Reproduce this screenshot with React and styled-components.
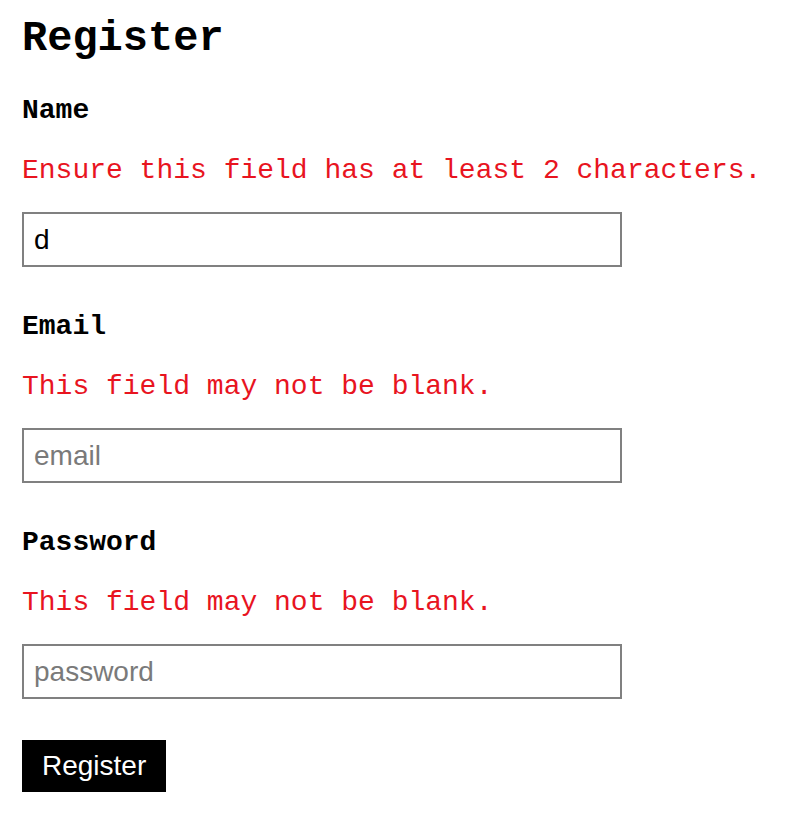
import styled, { createGlobalStyle } from "styled-components"

const GlobalStyle = createGlobalStyle`
  html, body {
    margin: 0;
    padding: 0;
    background: #fff;
  }
`

const Page = styled.div`
  padding: 15px 22px 20px;
  font-family: "Liberation Mono", "Courier New", monospace;
  color: #000;
`

const Title = styled.h1`
  margin: 0 0 32px;
  font-size: 42px;
  line-height: 48px;
  font-weight: bold;
`

const Form = styled.form`
  display: flex;
  flex-direction: column;
  align-items: flex-start;
`

const Field = styled.div`
  display: flex;
  flex-direction: column;
  align-items: flex-start;
  margin-bottom: 44px;

  &:last-of-type {
    margin-bottom: 41px;
  }
`

const Label = styled.label`
  font-size: 28px;
  line-height: 32px;
  font-weight: bold;
  margin-bottom: 28px;
`

const Error = styled.div`
  font-size: 28px;
  line-height: 32px;
  color: #e8141f;
  margin-bottom: 25px;
`

const Input = styled.input`
  box-sizing: border-box;
  width: 600px;
  height: 55px;
  padding: 0 10px;
  border: 2px solid #808080;
  border-radius: 0;
  outline: none;
  font-family: "Liberation Sans", Arial, sans-serif;
  font-size: 28px;
  color: #000;
  background: #fff;

  &::placeholder {
    color: #7a7a7a;
  }
`

const Button = styled.button`
  box-sizing: border-box;
  height: 52px;
  padding: 0 20px;
  border: none;
  border-radius: 0;
  background: #000;
  color: #fff;
  font-family: "Liberation Sans", Arial, sans-serif;
  font-size: 28px;
`

const fields = [
  { name: "name", label: "Name", error: "Ensure this field has at least 2 characters.", value: "d", type: "text" },
  { name: "email", label: "Email", error: "This field may not be blank.", value: "", type: "text" },
  { name: "password", label: "Password", error: "This field may not be blank.", value: "", type: "password" },
]

export default function App() {
  return (
    <Page>
      <GlobalStyle />
      <Title>Register</Title>
      <Form onSubmit={(e) => e.preventDefault()}>
        {fields.map((f) => (
          <Field key={f.name}>
            <Label htmlFor={f.name}>{f.label}</Label>
            <Error>{f.error}</Error>
            <Input id={f.name} type={f.type} placeholder={f.name} defaultValue={f.value} />
          </Field>
        ))}
        <Button type="submit">Register</Button>
      </Form>
    </Page>
  )
}
